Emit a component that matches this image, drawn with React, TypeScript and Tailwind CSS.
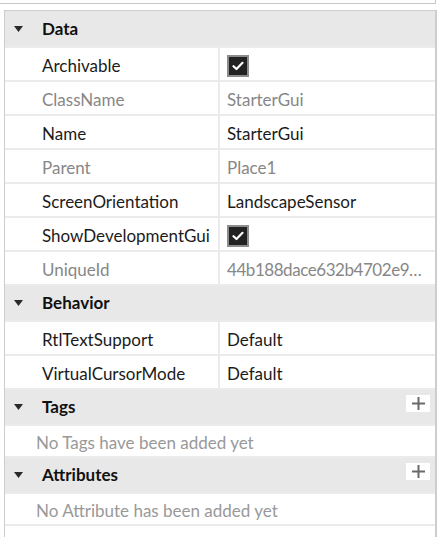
import React from "react";

type Prop = { name: string; value?: string; check?: boolean; disabled?: boolean; tight?: boolean };

const font = { fontFamily: "Lato, 'Open Sans', sans-serif" };

function Triangle() {
  return (
    <svg width="9" height="6" viewBox="0 0 9 6" className="block">
      <path d="M0 0 H9 L4.5 6 Z" fill="#2a2a2a" />
    </svg>
  );
}

function Plus() {
  return (
    <div className="absolute right-[5px] top-[5px] w-[24px] h-[17px] bg-white flex items-center justify-center">
      <svg width="13" height="13" viewBox="0 0 13 13">
        <path d="M6.5 0 V13 M0 6.5 H13" stroke="#6a6a6a" strokeWidth="2" />
      </svg>
    </div>
  );
}

function Header({ title, plus, tall }: { title: string; plus?: boolean; tall?: boolean }) {
  return (
    <div
      className={`relative flex items-center bg-[#e8e8e8] border-b-2 border-[#ebebeb] ${tall ? "h-[37px]" : "h-[36px]"}`}
    >
      <div className="w-[37px] pl-[9px] flex items-center">
        <Triangle />
      </div>
      <span className="text-[17px] font-bold text-[#111]">{title}</span>
      {plus && <Plus />}
    </div>
  );
}

function Check() {
  return (
    <div className="w-[22px] h-[22px] bg-[#222] border-2 border-[#8c8c8c] flex items-center justify-center">
      <svg width="12" height="10" viewBox="0 0 12 10">
        <path d="M1.5 5.2 L4.5 8 L10.5 1.8" stroke="white" strokeWidth="2.2" fill="none" strokeLinecap="round" strokeLinejoin="round" />
      </svg>
    </div>
  );
}

function Row({ p }: { p: Prop }) {
  const color = p.disabled ? "text-[#878787]" : "text-[#1b1b1b]";
  return (
    <div className="flex h-[34px] border-b-2 border-[#ebebeb] text-[17px]">
      <div className={`w-[213px] pl-[37px] pt-[4px] flex items-center whitespace-nowrap ${color}`}>{p.name}</div>
      <div className="w-[2px] bg-[#ebebeb]" />
      <div className={`flex-1 min-w-0 pl-[7px] pt-[4px] flex items-center whitespace-nowrap ${color}`}>
        {p.check ? <Check /> : <span className={p.tight ? "tracking-[-0.45px]" : ""}>{p.value}</span>}
      </div>
    </div>
  );
}

function Message({ text }: { text: string }) {
  return (
    <div className="h-[32px] pl-[31px] pt-[3px] flex items-center border-b-2 border-[#ebebeb] text-[17px] text-[#999] whitespace-nowrap">
      {text}
    </div>
  );
}

const data: Prop[] = [
  { name: "Archivable", check: true },
  { name: "ClassName", value: "StarterGui", disabled: true },
  { name: "Name", value: "StarterGui" },
  { name: "Parent", value: "Place1", disabled: true },
  { name: "ScreenOrientation", value: "LandscapeSensor" },
  { name: "ShowDevelopmentGui", check: true },
  { name: "UniqueId", value: "44b188dace632b4702e9…", disabled: true, tight: true },
];

const behavior: Prop[] = [
  { name: "RtlTextSupport", value: "Default" },
  { name: "VirtualCursorMode", value: "Default" },
];

export default function App() {
  return (
    <div className="w-[438px] h-[537px] bg-white overflow-hidden" style={font}>
      <div className="h-[4px] w-[436px] border-b border-r border-[#c8c8c8]" />
      <div className="mt-[6px] ml-[4px] w-[433px] border-t border-l border-r-2 border-[#cdcdcd] h-[600px]">
        <Header title="Data" tall />
        {data.map((p) => (
          <Row key={p.name} p={p} />
        ))}
        <Header title="Behavior" />
        {behavior.map((p) => (
          <Row key={p.name} p={p} />
        ))}
        <Header title="Tags" plus />
        <Message text="No Tags have been added yet" />
        <Header title="Attributes" plus />
        <Message text="No Attribute has been added yet" />
      </div>
    </div>
  );
}
